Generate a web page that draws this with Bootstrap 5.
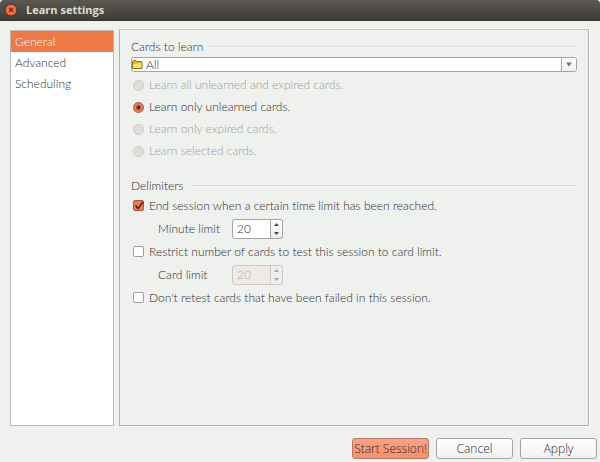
<!DOCTYPE html>
<html lang="en">
<head>
<meta charset="utf-8">
<meta name="viewport" content="width=device-width, initial-scale=1">
<title>Learn settings</title>
<link href="https://cdn.jsdelivr.net/npm/bootstrap@5.3.0/dist/css/bootstrap.min.css" rel="stylesheet">
<style>
body { font-family: Lato, "Open Sans", sans-serif; font-weight: 300; font-variant-ligatures: none; font-size: 12px; line-height: 20px; color: #2c2c2c; background: #eff1ef; }
.titlebar { height: 21px; background: linear-gradient(#5a5850, #3e3d38); border-bottom: 1px solid #373632; border-radius: 4px 4px 0 0; }
.titlebar h1 { font-family: "Open Sans", sans-serif; font-size: 11px; line-height: 20px; font-weight: 700; color: #dfdbd2; }
.close-btn { width: 14px; height: 14px; line-height: 0; }
.workspace { padding: 8px 11px 0 10px; gap: 5px; }
.side { width: 104px; background: #fff; border: 1px solid #b9b9b7; margin-top: 1px; }
.side .nav-link { color: #2c2c2c; line-height: 21px; border-radius: 0; padding: 0 4px; }
.side .nav-link.active { background: #f07746; color: #fff; }
.panel { border: 1px solid #b3adab; border-top-color: #c9c7c6; box-shadow: 1px 1px #fff; padding: 7px 11px; }
fieldset legend { font-size: 12px; line-height: 20px; gap: 6px; }
fieldset legend::after { content: ""; flex: 1; border-top: 1px solid #dcdcda; border-bottom: 1px solid #f7f8f7; }
.combo { height: 15px; }
.combo .form-select { height: 15px; padding: 0 28px 0 14px; font-size: 12px; font-weight: 300; line-height: 13px; color: #2c2c2c; background: #fff; border: 1px solid #aba2a0; border-radius: 3px; }
.combo-icon { left: 1px; top: 3px; pointer-events: none; }
.combo-arrow { right: 1px; top: 1px; width: 15px; height: 13px; background: linear-gradient(#fff, #f0f0ef); border-left: 1px solid #aba2a0; border-radius: 0 2px 2px 0; pointer-events: none; }
.option { min-height: 0; padding: 0; margin: 0; gap: 5px; }
.option .form-check-input { float: none; margin: 0; flex: none; width: 11px; height: 11px; background-color: #fff; border-color: #a29d9b; }
.option .form-check-input[type=radio]:disabled { background-color: #e2dcdb; border-color: #cfc9c8; opacity: 1; }
.option .form-check-input:disabled ~ .form-check-label { color: #a39b99; opacity: 1; }
.option .form-check-input[type=radio]:checked { border-color: #a8543a; background: radial-gradient(circle, #4a2a20 1px, #f07b4f 3px); }
.option .form-check-input[type=checkbox] { border-radius: 2px; }
.option .form-check-input[type=checkbox]:checked { border-color: #a8543a; background-color: #f07b4f; background-image: none; }
.tick { left: 1px; top: 5px; pointer-events: none; }
.radios { margin-top: 2px; }
.radios .option { height: 22px; }
.radios .option, .limits .option { padding-left: 2px; }
.limits > div { height: 23px; }
.delims { margin-top: 14px; }
.limits { margin-top: -2px; }
.sub { padding-left: 27px; }
.sub label { width: 74px; }
.spin { width: 51px; height: 20px; flex-wrap: nowrap; }
.spin .form-control { padding: 0 4px; min-height: 0; font-size: 12px; font-weight: 300; color: #2c2c2c; border: 1px solid #aba2a0; border-radius: 3px 0 0 3px; appearance: textfield; -moz-appearance: textfield; }
.spin .form-control::-webkit-inner-spin-button { appearance: none; }
.steps { width: 13px; border: 1px solid #aba2a0; border-left: 0; border-radius: 0 3px 3px 0; background: linear-gradient(#fff, #ececea); color: #4c4c4c; }
.steps .btn { line-height: 0; height: 9px; color: inherit; border: 0; opacity: 1; }
.spin.off .form-control { color: #b6aeac; background: #efe9e8; border-color: #cfc9c8; }
.spin.off .steps { border-color: #cfc9c8; color: #aaa3a1; background: #efefed; }
.actions { padding: 12px 3px 3px; gap: 7px; }
.actions .btn { width: 77px; height: 21px; font-family: "Open Sans", sans-serif; font-size: 12px; font-weight: 300; line-height: 19px; padding: 0; color: #2c2c2c; border: 1px solid #aba2a0; border-radius: 3px; background: linear-gradient(#fff, #f0f0ef); white-space: nowrap; }
.actions .btn.go { border-color: #b07a66; background: linear-gradient(#fba284, #f98f68); }
</style>
<script src="https://cdn.jsdelivr.net/npm/bootstrap@5.3.0/dist/js/bootstrap.bundle.min.js"></script>
</head>
<body class="min-vh-100 d-flex flex-column">
<header class="titlebar d-flex align-items-center px-1">
  <button type="button" class="close-btn btn p-0 border-0 ms-0 me-2" aria-label="Close">
    <svg width="14" height="14" viewBox="0 0 14 14"><circle cx="7" cy="7" r="6" fill="#ef6a40" stroke="#3a2e28"/><path d="M5.200 5.200l3.600 3.600M8.800 5.200l-3.600 3.600" stroke="#5a2a1c" stroke-width="1.200"/></svg>
  </button>
  <h1 class="m-0">Learn settings</h1>
</header>
<main class="workspace d-flex flex-grow-1">
  <nav class="side nav flex-column flex-nowrap flex-shrink-0" aria-label="Sections">
    <a class="nav-link active" href="#general" aria-current="page">General</a>
    <a class="nav-link" href="#advanced">Advanced</a>
    <a class="nav-link" href="#scheduling">Scheduling</a>
  </nav>
  <form class="panel flex-grow-1" id="general">
    <fieldset>
      <legend class="d-flex align-items-center float-none mb-0">Cards to learn</legend>
      <div class="combo position-relative">
        <select class="form-select" aria-label="Category"><option>All</option></select>
        <svg class="combo-icon position-absolute" width="11" height="10" viewBox="0 0 11 10"><path d="M.5 8.500V1.500L1.500.5h2.500l1 1h4.500v7z" fill="#d9b92a" stroke="#8d7508"/><path d="M1 8V4h4l1-1h4.500v5z" fill="#f7e56a"/><path d="M.5 8.500h9.500V3" fill="none" stroke="#8d7508"/></svg>
        <span class="combo-arrow position-absolute d-flex align-items-center justify-content-center"><svg width="6" height="5" viewBox="0 0 6 5"><path d="M0 .5h6L3 4.500z" fill="#777"/></svg></span>
      </div>
      <div class="radios">
        <div class="option form-check d-flex align-items-center"><input class="form-check-input" type="radio" name="mode" id="m1" disabled><label class="form-check-label" for="m1">Learn all unlearned and expired cards.</label></div>
        <div class="option form-check d-flex align-items-center"><input class="form-check-input" type="radio" name="mode" id="m2" checked><label class="form-check-label" for="m2">Learn only unlearned cards.</label></div>
        <div class="option form-check d-flex align-items-center"><input class="form-check-input" type="radio" name="mode" id="m3" disabled><label class="form-check-label" for="m3">Learn only expired cards.</label></div>
        <div class="option form-check d-flex align-items-center"><input class="form-check-input" type="radio" name="mode" id="m4" disabled><label class="form-check-label" for="m4">Learn selected cards.</label></div>
      </div>
    </fieldset>
    <fieldset class="delims">
      <legend class="d-flex align-items-center float-none mb-0">Delimiters</legend>
      <div class="limits">
        <div class="option form-check d-flex align-items-center position-relative"><input class="form-check-input" type="checkbox" id="c1" checked><label class="form-check-label" for="c1">End session when a certain time limit has been reached.</label>
          <svg class="tick position-absolute" width="13" height="12" viewBox="0 0 13 12"><path d="M3.500 6.500l2.500 3L11 3" fill="none" stroke="#40241c" stroke-width="1.500"/></svg></div>
        <div class="sub d-flex align-items-center"><label for="minutes">Minute limit</label>
          <div class="spin input-group"><input class="form-control" type="number" id="minutes" value="20">
            <div class="steps d-flex flex-column"><button type="button" class="btn p-0" aria-label="More minutes"><svg width="5" height="3" viewBox="0 0 5 3"><path d="M0 3h5L2.500 0z" fill="currentColor"/></svg></button><button type="button" class="btn p-0" aria-label="Fewer minutes"><svg width="5" height="3" viewBox="0 0 5 3"><path d="M0 0h5L2.500 3z" fill="currentColor"/></svg></button></div></div></div>
        <div class="option form-check d-flex align-items-center"><input class="form-check-input" type="checkbox" id="c2"><label class="form-check-label" for="c2">Restrict number of cards to test this session to card limit.</label></div>
        <div class="sub d-flex align-items-center"><label for="cards">Card limit</label>
          <div class="spin off input-group"><input class="form-control" type="number" id="cards" value="20" disabled>
            <div class="steps d-flex flex-column"><button type="button" class="btn p-0" aria-label="More cards" disabled><svg width="5" height="3" viewBox="0 0 5 3"><path d="M0 3h5L2.500 0z" fill="currentColor"/></svg></button><button type="button" class="btn p-0" aria-label="Fewer cards" disabled><svg width="5" height="3" viewBox="0 0 5 3"><path d="M0 0h5L2.500 3z" fill="currentColor"/></svg></button></div></div></div>
        <div class="option form-check d-flex align-items-center"><input class="form-check-input" type="checkbox" id="c3"><label class="form-check-label" for="c3">Don't retest cards that have been failed in this session.</label></div>
      </div>
    </fieldset>
  </form>
</main>
<footer class="actions d-flex justify-content-end">
  <button type="button" class="btn go">Start Session!</button>
  <button type="button" class="btn">Cancel</button>
  <button type="button" class="btn">Apply</button>
</footer>
</body>
</html>
